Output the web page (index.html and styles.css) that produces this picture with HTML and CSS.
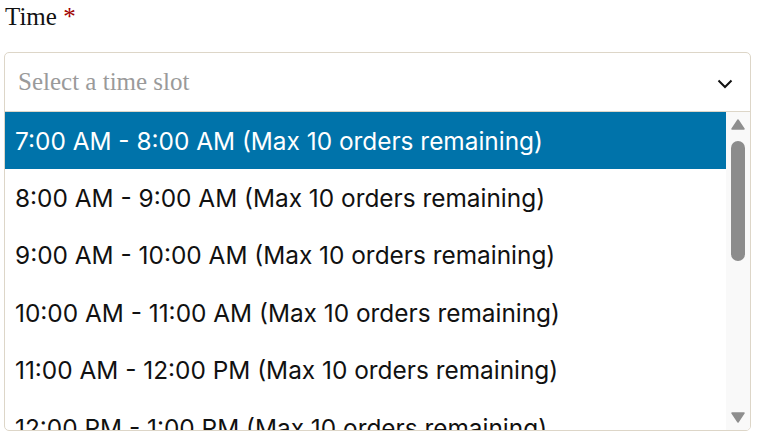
FILE: index.html
```html
<!DOCTYPE html>
<html lang="en">
<head>
<meta charset="utf-8">
<link rel="stylesheet" href="styles.css">
</head>
<body>
<div class="field">
  <label class="label">Time <span class="req">*</span></label>
  <div class="select">
    <div class="select-head">
      <span class="placeholder">Select a time slot</span>
      <svg class="chev" width="16" height="10" viewBox="0 0 16 10"><path d="M1.5 1.5 L8 8 L14.5 1.5" fill="none" stroke="#111" stroke-width="2"/></svg>
    </div>
    <div class="dropdown">
      <ul class="options">
        <li class="opt active">7:00 AM - 8:00 AM (Max 10 orders remaining)</li>
        <li class="opt">8:00 AM - 9:00 AM (Max 10 orders remaining)</li>
        <li class="opt">9:00 AM - 10:00 AM (Max 10 orders remaining)</li>
        <li class="opt">10:00 AM - 11:00 AM (Max 10 orders remaining)</li>
        <li class="opt">11:00 AM - 12:00 PM (Max 10 orders remaining)</li>
        <li class="opt">12:00 PM - 1:00 PM (Max 10 orders remaining)</li>
      </ul>
      <div class="scrollbar">
        <svg class="arrow" width="14" height="11" viewBox="0 0 14 11"><path d="M7 1 L13 10 L1 10 Z" fill="#8e8e8e" stroke="#8e8e8e" stroke-width="1.5" stroke-linejoin="round"/></svg>
        <div class="track"><div class="thumb"></div></div>
        <svg class="arrow" width="14" height="11" viewBox="0 0 14 11"><path d="M1 1 L13 1 L7 10 Z" fill="#8e8e8e" stroke="#8e8e8e" stroke-width="1.5" stroke-linejoin="round"/></svg>
      </div>
    </div>
  </div>
</div>
</body>
</html>
```

FILE: styles.css
```css
html, body {
  margin: 0;
  padding: 0;
  background: #fff;
}
.field {
  padding: 3px 8px 0 4px;
}
.label {
  display: block;
  font-family: "Liberation Serif", "Times New Roman", serif;
  font-size: 25px;
  line-height: 28px;
  color: #111;
  padding-left: 1px;
  margin-bottom: 21px;
}
.req {
  color: #a00000;
}
.select {
  width: 745px;
  border: 1px solid #ddd6c8;
  border-radius: 5px;
  overflow: hidden;
  background: #fff;
}
.select-head {
  height: 58px;
  border-bottom: 1px solid #ddd6c8;
  display: flex;
  align-items: center;
  justify-content: space-between;
  padding: 0 17px 0 13px;
}
.placeholder {
  font-family: "Liberation Serif", "Times New Roman", serif;
  font-size: 25px;
  color: #9a9a9a;
}
.chev {
  margin-top: 3px;
}
.dropdown {
  display: flex;
  height: 318px;
}
.options {
  list-style: none;
  margin: 0;
  padding: 0;
  flex: 1;
  overflow: hidden;
}
.opt {
  height: 57.4px;
  display: flex;
  align-items: center;
  padding-left: 10px;
  font-family: Inter, "Noto Sans", sans-serif;
  font-size: 24.4px;
  color: #111;
  white-space: nowrap;
}
.opt.active {
  background: #0073aa;
  color: #fff;
}
.scrollbar {
  width: 24px;
  background: #f9f9f9;
  display: flex;
  flex-direction: column;
  align-items: center;
  padding: 7px 0 7px;
}
.arrow {
  flex: none;
}
.track {
  flex: 1;
  width: 100%;
  display: flex;
  justify-content: center;
  padding-top: 11px;
}
.thumb {
  width: 14px;
  height: 120px;
  background: #8c8c8c;
  border-radius: 7px;
}
```
